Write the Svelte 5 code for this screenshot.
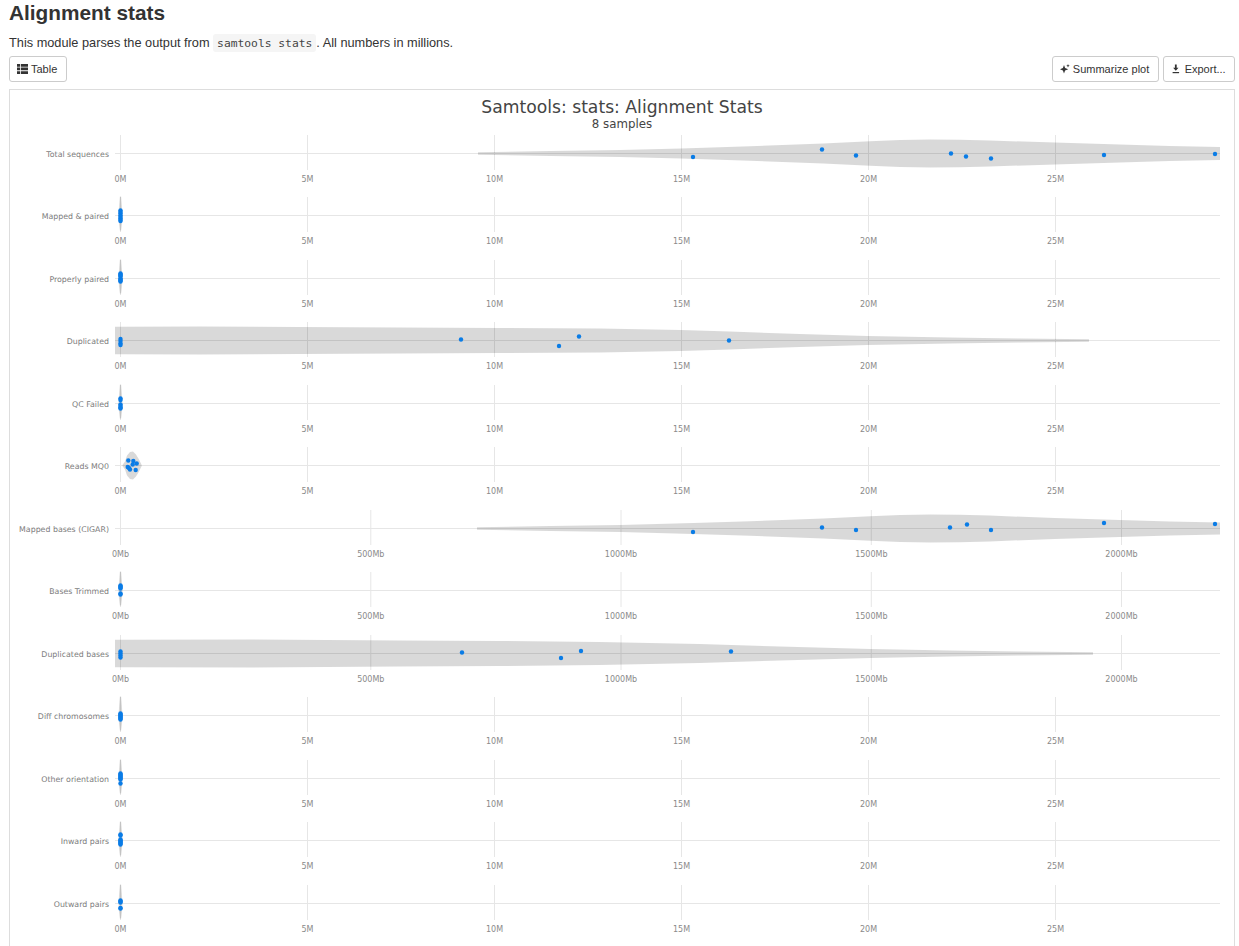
<script>
  const AXIS_Y = 24.5
  const X0 = 110

  const mTicks = [
    [120.5, '0M'], [307.5, '5M'], [494.5, '10M'], [681.5, '15M'], [868.5, '20M'], [1055.5, '25M']
  ]
  const mbTicks = [
    [120.5, '0Mb'], [370.8, '500Mb'], [621, '1000Mb'], [871.3, '1500Mb'], [1121.5, '2000Mb']
  ]

  // narrow sliver that sits on the zero line when all samples are ~0
  const sliver = [[-19, 0.6], [-8, 1.5], [0, 1.9], [8, 1.5], [15, 0.6]]

  const atZero = (list) => list.map((dy) => [120.5, dy])

  const rows = [
    {
      label: 'Total sequences', ticks: mTicks,
      shape: [[478,1.3],[550,2.5],[620,3.5],[681,5],[750,7.2],[823,10],[870,12.2],[900,13.5],[930,14],[960,13.7],[990,12.9],[1055,11],[1120,9],[1170,7.5],[1220,6.5]],
      dots: [[693,3.5],[822,-4],[856,2],[951,0],[966,3],[991,5],[1104,1.5],[1215,0.5]]
    },
    { label: 'Mapped & paired', ticks: mTicks, dots: atZero([-5,-3.5,-2,0,1.5,3,4.5,5.5]) },
    { label: 'Properly paired', ticks: mTicks, dots: atZero([-5,-4,-3,-2,0,1,2,3]) },
    {
      label: 'Duplicated', ticks: mTicks,
      shape: [[115,13.8],[200,14],[300,13.5],[400,13],[500,12.5],[600,12],[681,10.5],[730,9],[800,6.5],[868,4.5],[950,3],[1020,2],[1089,1.3]],
      dots: [[461,-1],[559,5.5],[579,-4],[729,0], ...atZero([-1.5,0.5,3,4.5])]
    },
    { label: 'QC Failed', ticks: mTicks, dots: atZero([-5,-3.5,1,2.5,4,5]) },
    {
      label: 'Reads MQ0', ticks: mTicks,
      shape: [[122.5,0.5],[125,4],[127,10],[130,13.5],[133,14],[136,11],[139,6],[141.7,0.5]],
      dots: [[128.3,-5],[133.3,-4.5],[136.7,-2],[132.7,-1],[127.7,1.5],[129,2.5],[130,4],[135.7,4.5]],
      full: true
    },
    {
      label: 'Mapped bases (CIGAR)', ticks: mbTicks,
      shape: [[477,1.3],[550,2.5],[620,3.5],[693,5.5],[750,7.2],[823,10],[870,12.2],[900,13.5],[930,14],[960,13.7],[990,12.9],[1055,10.5],[1120,8.5],[1170,7],[1220,6]],
      dots: [[693,3.5],[822,-1],[856,1.5],[950,-1],[967,-4],[991,1.5],[1104,-5.5],[1215,-4.5]]
    },
    { label: 'Bases Trimmed', ticks: mbTicks, dots: atZero([-5,-4,-3,-2,3,4]) },
    {
      label: 'Duplicated bases', ticks: mbTicks,
      shape: [[115,13.8],[250,14],[400,13],[500,12.5],[600,11.5],[700,9.5],[780,7],[871,4.5],[950,3],[1020,2],[1093,1.3]],
      dots: [[462,-1],[561,4.5],[581,-2.5],[731,-2], ...atZero([-2,0,2,4])]
    },
    { label: 'Diff chromosomes', ticks: mTicks, dots: atZero([-2,-1,0,1,2,3,4]) },
    { label: 'Other orientation', ticks: mTicks, dots: atZero([-5,-4,-3,-2,-1,0,1,5]) },
    { label: 'Inward pairs', ticks: mTicks, dots: atZero([-6,-5,-1,0,1,2,3,4]) },
    { label: 'Outward pairs', ticks: mTicks, dots: atZero([-3,-2,-1,4.5,5]) }
  ]

  function violinPath(pts) {
    const top = pts.map(([x, h]) => `${x},${AXIS_Y - h}`)
    const bottom = pts.slice().reverse().map(([x, h]) => `${x},${AXIS_Y + h}`)
    return 'M' + top.concat(bottom).join('L') + 'Z'
  }

  function sliverPath() {
    const right = sliver.map(([dy, w]) => `${120.5 + w},${AXIS_Y + dy}`)
    const left = sliver.slice().reverse().map(([dy, w]) => `${120.5 - w},${AXIS_Y + dy}`)
    return 'M' + right.concat(left).join('L') + 'Z'
  }
</script>

<main class="page">
  <h2>Alignment stats</h2>
  <p class="intro">This module parses the output from <code>samtools stats</code>. All numbers in millions.</p>

  <div class="toolbar">
    <button class="btn">
      <svg class="icon" width="11" height="10" viewBox="0 0 11 10" aria-hidden="true">
        <path d="M0 0h3v2.7H0zM3.8 0H11v2.7H3.8zM0 3.6h3v2.7H0zM3.8 3.6H11v2.7H3.8zM0 7.2h3V10H0zM3.8 7.2H11V10H3.8z" fill="#333" />
      </svg>
      Table
    </button>
    <div class="actions">
      <button class="btn">
        <svg class="icon" width="10" height="10" viewBox="0 0 10 10" aria-hidden="true">
          <path d="M4 1 5.1 4 8.2 5.2 5.1 6.4 4 9.6 2.9 6.4 0 5.2 2.9 4Z" fill="#333" />
          <path d="M8 0 8.5 1.2 9.7 1.7 8.5 2.2 8 3.4 7.5 2.2 6.3 1.7 7.5 1.2Z" fill="#333" />
        </svg>
        Summarize plot
      </button>
      <button class="btn">
        <svg class="icon" width="11" height="10" viewBox="0 0 11 10" aria-hidden="true">
          <path d="M3.9 0.5h1.8v3.3h1.8L4.8 6.7 2.1 3.8h1.8z" fill="#333" />
          <path d="M1.6 8h6.5v1.2H1.6z" fill="#333" />
        </svg>
        Export...
      </button>
    </div>
  </div>

  <section class="card">
    <div class="title">Samtools: stats: Alignment Stats</div>
    <div class="subtitle">8 samples</div>

    {#each rows as row}
      <div class="row">
        <div class="label">{row.label}</div>
        <svg class="plot" viewBox="{X0} 0 1124 62.5" width="1124" height="62.5">
          {#each row.ticks as [x, text]}
            <line class="grid" x1={x} x2={x} y1={AXIS_Y - 18.5} y2={AXIS_Y + 16.5} />
            <text class="tick" x={x} y={AXIS_Y + 28}>{text}</text>
          {/each}
          <line class="grid" x1="115" x2="1220" y1={AXIS_Y} y2={AXIS_Y} />
          <path class="violin" d={row.shape ? violinPath(row.shape) : sliverPath()} />
          {#each row.dots as [x, dy]}
            <circle class="dot" cx={x} cy={AXIS_Y + dy} r="2.2" />
          {/each}
        </svg>
      </div>
    {/each}
  </section>
</main>

<style>
  :global(body) {
    margin: 0;
    overflow: hidden;
    background: #fff;
  }

  .page {
    padding: 0 4px 0 9px;
    height: 946px;
    overflow: hidden;
    font-family: "Liberation Sans", Arial, sans-serif;
    color: #333;
    font-size: 12.75px;
  }

  h2 {
    margin: 0;
    padding-top: 1px;
    font-size: 20.8px;
    line-height: 24px;
    font-weight: 700;
  }

  .intro {
    margin: 9px 0 0;
    line-height: 18px;
  }

  code {
    font-family: "DejaVu Sans Mono", "Liberation Mono", monospace;
    font-size: 11.3px;
    background: #f5f5f5;
    border-radius: 3px;
    padding: 2.5px 4px;
    color: #444;
    vertical-align: 0.5px;
  }

  .toolbar {
    display: flex;
    justify-content: space-between;
    margin-top: 3px;
  }

  .actions {
    display: flex;
    gap: 4px;
  }

  .btn {
    display: flex;
    align-items: center;
    gap: 3px;
    height: 26px;
    padding: 0 8.4px 0 7px;
    border: 1px solid #ccc;
    border-radius: 3px;
    background: #fff;
    color: #333;
    font: 11px "Liberation Sans", Arial, sans-serif;
  }

  .card {
    margin-top: 7px;
    border: 1px solid #ddd;
    padding: 8px 0 12px;
    font-family: "DejaVu Sans", sans-serif;
  }

  .title {
    text-align: center;
    font-size: 17.2px;
    line-height: 19px;
    color: #444;
  }

  .subtitle {
    text-align: center;
    font-size: 11.8px;
    line-height: 14px;
    color: #444;
    margin-bottom: -2px;
  }

  .row {
    display: flex;
    align-items: flex-start;
    height: 62.5px;
  }

  .label {
    width: 99px;
    flex: none;
    text-align: right;
    font-size: 7.85px;
    line-height: 10px;
    margin-top: 21px;
    margin-right: 1px;
    color: #7d7d7d;
    white-space: nowrap;
  }

  .plot {
    display: block;
    flex: none;
    overflow: visible;
  }

  .grid {
    stroke: #e6e6e6;
    stroke-width: 1;
  }

  .violin {
    fill: rgba(0, 0, 0, 0.15);
  }

  .dot {
    fill: #0a7ce6;
  }

  .tick {
    fill: #8a8a8a;
    font-size: 8px;
    text-anchor: middle;
  }
</style>
